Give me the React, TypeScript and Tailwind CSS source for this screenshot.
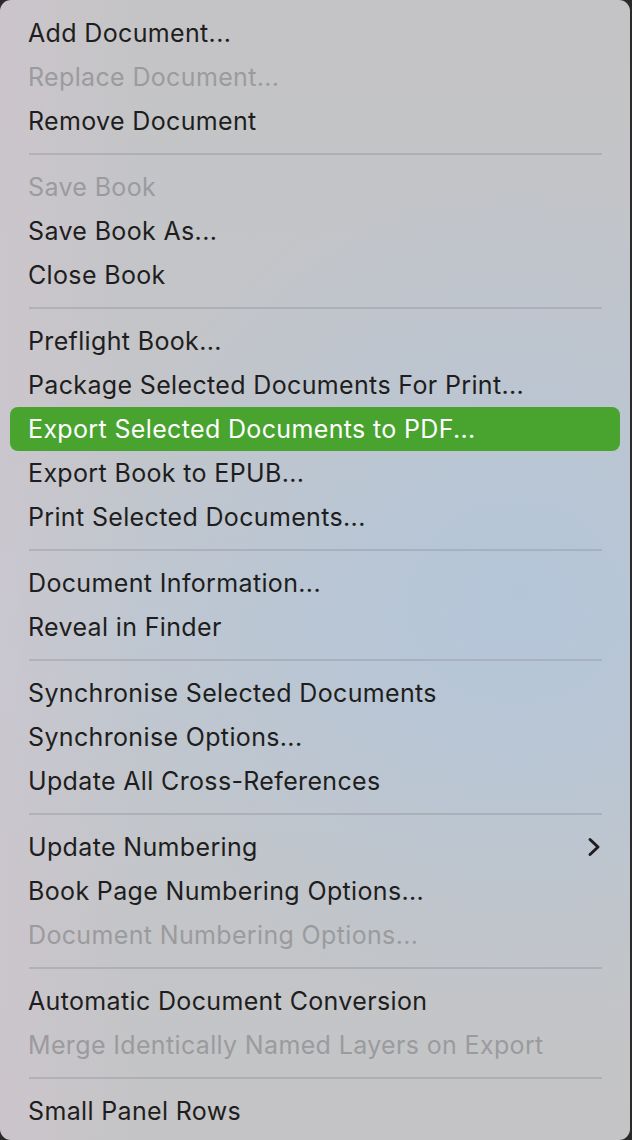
import React from "react";

type Item =
  | { type: "item"; label: string; disabled?: boolean; active?: boolean; submenu?: boolean }
  | { type: "sep" };

const items: Item[] = [
  { type: "item", label: "Add Document..." },
  { type: "item", label: "Replace Document...", disabled: true },
  { type: "item", label: "Remove Document" },
  { type: "sep" },
  { type: "item", label: "Save Book", disabled: true },
  { type: "item", label: "Save Book As..." },
  { type: "item", label: "Close Book" },
  { type: "sep" },
  { type: "item", label: "Preflight Book..." },
  { type: "item", label: "Package Selected Documents For Print..." },
  { type: "item", label: "Export Selected Documents to PDF...", active: true },
  { type: "item", label: "Export Book to EPUB..." },
  { type: "item", label: "Print Selected Documents..." },
  { type: "sep" },
  { type: "item", label: "Document Information..." },
  { type: "item", label: "Reveal in Finder" },
  { type: "sep" },
  { type: "item", label: "Synchronise Selected Documents" },
  { type: "item", label: "Synchronise Options..." },
  { type: "item", label: "Update All Cross-References" },
  { type: "sep" },
  { type: "item", label: "Update Numbering", submenu: true },
  { type: "item", label: "Book Page Numbering Options..." },
  { type: "item", label: "Document Numbering Options...", disabled: true },
  { type: "sep" },
  { type: "item", label: "Automatic Document Conversion" },
  { type: "item", label: "Merge Identically Named Layers on Export", disabled: true },
  { type: "sep" },
  { type: "item", label: "Small Panel Rows" },
];

export default function App() {
  return (
    <div className="w-[632px] h-[1140px] bg-[#2a2a2a] overflow-hidden">
      <div
        className="w-[630px] h-[1140px] rounded-[11px] overflow-hidden pt-[11px] font-['Inter','Liberation_Sans',sans-serif] bg-[radial-gradient(ellipse_65%_38%_at_82%_52%,rgba(178,197,218,0.85),transparent),linear-gradient(to_right,rgba(208,198,206,0.6),rgba(200,200,206,0)_22%),linear-gradient(to_bottom,#c4c4c6,#c3c5c9_35%,#bfc7d1_55%,#c3c5c8_80%,#c4c4c6)]"
      >
        {items.map((it, i) =>
          it.type === "sep" ? (
            <div key={i} className="py-[10px] pl-[29px] pr-[28px]">
              <div className="h-[2px] bg-[rgba(150,150,160,0.45)]" />
            </div>
          ) : (
            <div key={i} className="px-[10px]">
              <div
                className={
                  "h-[44px] flex items-center justify-between pl-[19px] pr-[20px] rounded-[8px] text-[25px] tracking-[0.35px] " +
                  (it.active
                    ? "bg-[#48a42e] text-white"
                    : it.disabled
                    ? "text-[#9b9b9e]"
                    : "text-[#1e1e20]")
                }
              >
                <span className="leading-none -ml-[1px]">{it.label}</span>
                {it.submenu && (
                  <svg width="14" height="20" viewBox="0 0 14 20" className="-mr-[1px]">
                    <path
                      d="M3 2.5 L11 10 L3 17.5"
                      fill="none"
                      stroke="#1e1e20"
                      strokeWidth="3"
                      strokeLinecap="round"
                      strokeLinejoin="round"
                    />
                  </svg>
                )}
              </div>
            </div>
          )
        )}
      </div>
    </div>
  );
}
